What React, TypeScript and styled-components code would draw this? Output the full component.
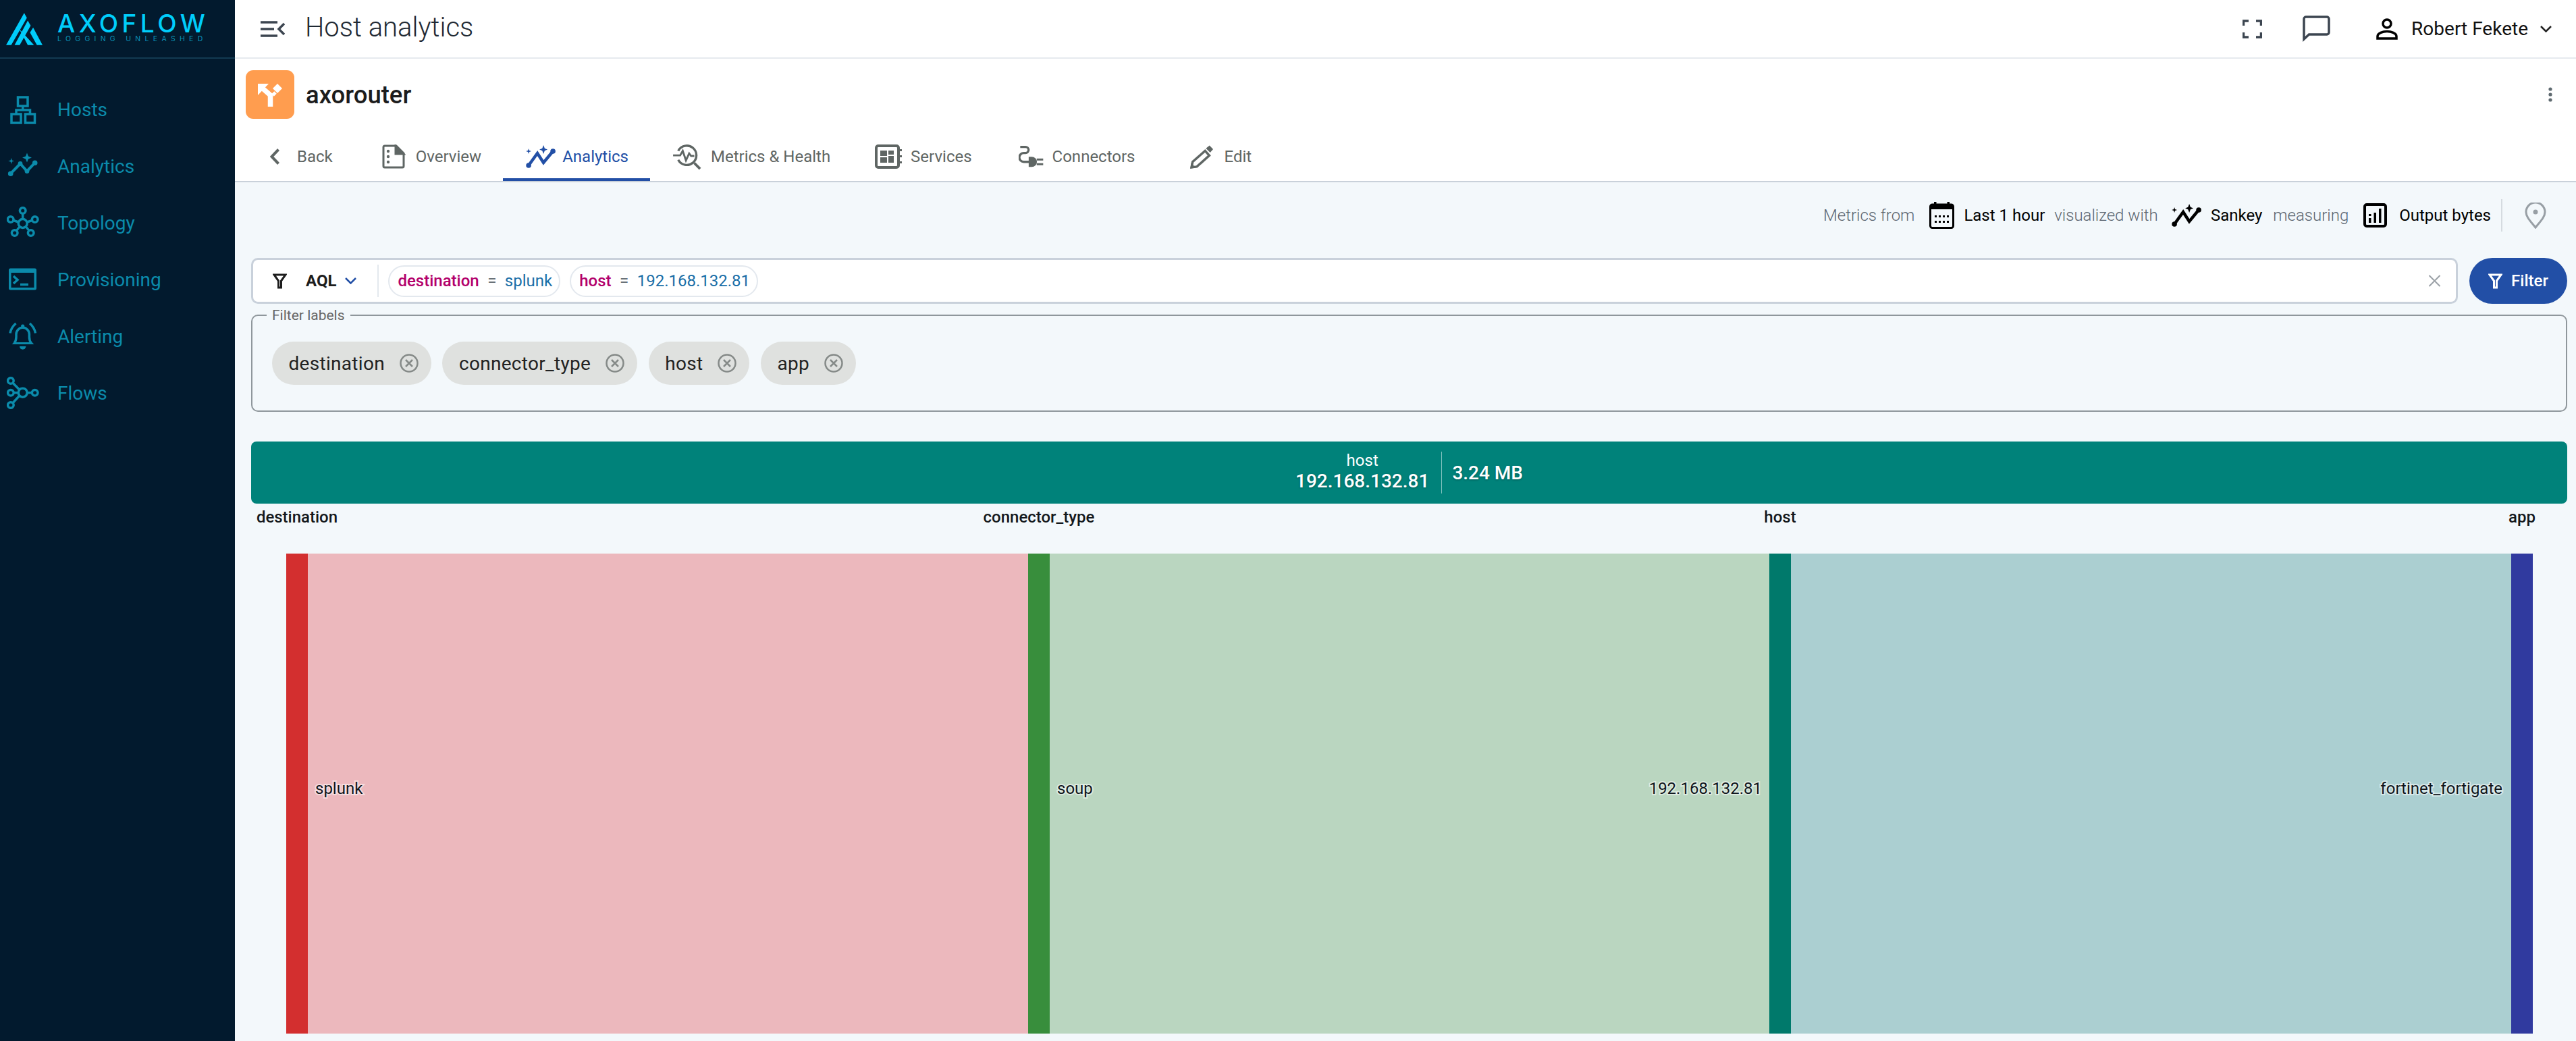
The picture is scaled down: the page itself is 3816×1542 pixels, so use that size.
import styled, { createGlobalStyle } from "styled-components";

// Host analytics page of the Axoflow console

const GlobalStyle = createGlobalStyle`
  html, body {
    margin: 0;
    padding: 0;
    background: #f3f8fb;
    font-family: Roboto, "Liberation Sans", sans-serif;
  }
`;

const teal = "#0b8bab";
const grey = "#5f6664";

const NavIcon = ({ children }: { children: React.ReactNode }) => (
  <svg width={48} height={48} viewBox="0 0 48 48" fill="none" stroke={teal} strokeWidth={3.5}>
    {children}
  </svg>
);

const navItems = [
  {
    label: "Hosts",
    icon: (
      <NavIcon>
        <rect x="16.5" y="6" width="14.5" height="13" />
        <rect x="7" y="31" width="14" height="13" />
        <rect x="27.5" y="31" width="14" height="13" />
        <path d="M23.8 19v6M14 31v-6h20.5v6" />
      </NavIcon>
    ),
  },
  {
    label: "Analytics",
    icon: (
      <NavIcon>
        <path d="M5.7 35.2 20 20.5l10 11 11.7-12.3" strokeWidth={4} />
        <g fill={teal} stroke="none">
          <circle cx="5.7" cy="35.2" r="3.8" />
          <circle cx="20" cy="20.5" r="3.4" />
          <circle cx="30" cy="31.5" r="3.4" />
          <circle cx="41.7" cy="19.2" r="3.8" />
          <path d="M30 4.5 32 9.5 37 11.5 32 13.5 30 18.5 28 13.5 23 11.5 28 9.5Z" />
          <path d="M6.7 12 7.8 15.4 11.2 16.5 7.8 17.6 6.7 21 5.6 17.6 2.2 16.5 5.6 15.4Z" />
        </g>
      </NavIcon>
    ),
  },
  {
    label: "Topology",
    icon: (
      <NavIcon>
        <circle cx="23.7" cy="25" r="6.5" />
        <circle cx="23.7" cy="6" r="4.3" />
        <circle cx="5.7" cy="19" r="4.3" />
        <circle cx="41.7" cy="19" r="4.3" />
        <circle cx="11.7" cy="39" r="4.3" />
        <circle cx="35.7" cy="39" r="4.3" />
        <path d="M23.7 10.5v8M10 20.5l7.5 2.5M37.5 20.5 30 23M14.5 35.5l4.5-5.5M33 35.5 28.5 30" />
      </NavIcon>
    ),
  },
  {
    label: "Provisioning",
    icon: (
      <NavIcon>
        <rect x="3" y="7.5" width="41" height="32" rx="2.5" fill={teal} stroke="none" />
        <rect x="6.5" y="14" width="34" height="22" fill="#021a2e" stroke="none" />
        <path d="M10 19l6 5.5-6 5.5M20 31.5h12" />
      </NavIcon>
    ),
  },
  {
    label: "Alerting",
    icon: (
      <NavIcon>
        <path d="M11 34.5c2-2.5 3-5.5 3-9.5v-4a9.7 9.7 0 0 1 19.4 0v4c0 4 1 7 3 9.5" />
        <path d="M7.7 36h32.6l-2.8-3H10.5Z" fill={teal} stroke="none" />
        <path d="M19 39h9.4a4.7 4.7 0 0 1-9.4 0Z" fill={teal} stroke="none" />
        <circle cx="23.7" cy="9" r="2.6" fill={teal} stroke="none" />
        <path d="M5 19.5Q6.5 11 13.5 5M42.5 19.5Q41 11 34 5" />
      </NavIcon>
    ),
  },
  {
    label: "Flows",
    icon: (
      <NavIcon>
        <circle cx="23.7" cy="23.7" r="6.5" />
        <circle cx="5.9" cy="6" r="4.3" />
        <circle cx="5.9" cy="23.7" r="4.3" />
        <circle cx="5.9" cy="42" r="4.3" />
        <circle cx="41.7" cy="23.7" r="4.3" />
        <path d="M9 9.2 18.5 19M10.2 23.7h7M9 38.8 18.5 28.5M30.2 23.7h7" />
      </NavIcon>
    ),
  },
];

const BrandMark = () => (
  <svg width={54} height={48} viewBox="27 48 163 144" fill="#00cdfb">
    <polygon points="108,48 120,70 50,192 27,192" />
    <polygon points="124,82 137,105 88,192 65,192" />
    <polygon points="84,118 96,138 124,192 152,192" />
    <polygon points="148,113 190,192 165,192 134,136" />
  </svg>
);

const MenuIcon = () => (
  <svg width={36} height={24} viewBox="0 0 36 24" fill="none" stroke="#3c4550" strokeWidth={3.5}>
    <path d="M0 2h25M0 12h20M0 22h25M35 4l-8 8 8 8" />
  </svg>
);

const FullscreenIcon = () => (
  <svg width={29} height={28} viewBox="0 0 29 28" fill="none" stroke="#3c4550" strokeWidth={3.5}>
    <path d="M1.5 9V2H9M20 2h7.5v7M1.5 19v7H9M20 26h7.5v-7" />
  </svg>
);

const ChatIcon = () => (
  <svg width={41} height={39} viewBox="0 0 41 39" fill="none" stroke="#3c4550" strokeWidth={3.5}>
    <path d="M2 35V5a3 3 0 0 1 3-3h31a3 3 0 0 1 3 3v20a3 3 0 0 1-3 3H9.5Z" />
  </svg>
);

const UserIcon = () => (
  <svg width={32} height={32} viewBox="0 0 32 32" fill="none" stroke="#000" strokeWidth={3.5}>
    <circle cx="16" cy="8" r="6" />
    <path d="M2 30v-3c0-5 8-7.5 14-7.5S30 22 30 27v3Z" />
  </svg>
);

const Chevron = ({ color = "#222" }: { color?: string }) => (
  <svg width={17} height={10} viewBox="0 0 17 10" fill="none" stroke={color} strokeWidth={2.5}>
    <path d="M1 1l7.5 7.5L16 1" />
  </svg>
);

const MoreIcon = () => (
  <svg width={6} height={22} viewBox="0 0 6 22" fill="#5f6a70">
    <circle cx="3" cy="3" r="2.6" />
    <circle cx="3" cy="11" r="2.6" />
    <circle cx="3" cy="19" r="2.6" />
  </svg>
);

const RouterGlyph = () => (
  <svg width={72} height={72} viewBox="0 0 72 72" fill="#fff">
    <path d="M36.5 54V37L24 26" fill="none" stroke="#fff" strokeWidth={7.5} />
    <polygon points="18,20 34,20 18,37" />
    <polygon points="47,20 54,27 47,34 40,27" />
    <path d="M40 37l4-4" stroke="#fff" strokeWidth={5} />
  </svg>
);

const BackIcon = () => (
  <svg width={14} height={24} viewBox="0 0 14 24" fill="none" stroke={grey} strokeWidth={4}>
    <path d="M12.5 1.5 2.5 12l10 10.5" />
  </svg>
);

const OverviewIcon = () => (
  <svg width={36} height={36} viewBox="0 0 36 36" fill="none" stroke={grey} strokeWidth={3}>
    <path d="M3 4a2 2 0 0 1 2-2h17l11 11v19a2 2 0 0 1-2 2H5a2 2 0 0 1-2-2Z" />
    <path d="M21 2v12h12Z" fill={grey} />
    <g fill={grey} stroke="none">
      <circle cx="10" cy="10" r="2.2" />
      <circle cx="10" cy="18" r="2.2" />
      <circle cx="10" cy="26" r="2.2" />
    </g>
  </svg>
);

const SparkLine = ({ color, size }: { color: string; size: number }) => (
  <svg width={size * 1.3} height={size} viewBox="0 0 44 34" fill={color}>
    <path d="M4 30 17 12l9 14 14-17" fill="none" stroke={color} strokeWidth={4.5} />
    <circle cx="4" cy="30" r="3.8" />
    <circle cx="40" cy="9" r="3.8" />
    <path d="M26 0 27.8 4.7 32 6.5 27.8 8.3 26 13 24.2 8.3 20 6.5 24.2 4.7Z" />
    <path d="M4 5 5 8 8 9 5 10 4 13 3 10 0 9 3 8Z" />
  </svg>
);

const MetricsIcon = () => (
  <svg width={44} height={40} viewBox="0 0 46 42" fill="none" stroke={grey} strokeWidth={3.5}>
    <path d="M8 12A15 15 0 1 1 8 26" />
    <path d="M33 31l9 9" strokeWidth={4} />
    <path d="M0 19h11l4-7 5 15 5-11 3 4h5" strokeWidth={3} />
  </svg>
);

const ServicesIcon = () => (
  <svg width={40} height={36} viewBox="0 0 40 36" fill={grey}>
    <rect x="2" y="2" width="33" height="32" rx="3" fill="none" stroke={grey} strokeWidth={4} />
    <rect x="8" y="9" width="10" height="8" />
    <rect x="20" y="9" width="8" height="6" />
    <rect x="8" y="19" width="10" height="8" />
    <rect x="20" y="17" width="8" height="10" />
    <rect x="37" y="7" width="3" height="3" />
    <rect x="37" y="16" width="3" height="3" />
    <rect x="37" y="25" width="3" height="3" />
  </svg>
);

const ConnectorsIcon = () => (
  <svg width={38} height={33} viewBox="55 40 115 100" fill={grey}>
    <path d="M62 48h24a13.5 13.5 0 0 1 0 27H78a20 20 0 0 0 0 40h24" fill="none" stroke={grey} strokeWidth={10} />
    <path d="M100 92h14a23 23 0 0 1 0 46h-14Z" />
    <rect x="136" y="100" width="29" height="9" />
    <rect x="136" y="121" width="29" height="9" />
  </svg>
);

const EditIcon = () => (
  <svg width={36} height={36} viewBox="810 30 115 115" fill={grey}>
    <path d="M820 138l5-26 59-52 20 22-59 53Z" fill="none" stroke={grey} strokeWidth={11} />
    <polygon points="888,48 905,35 922,52 908,68" />
    <polygon points="814,144 818,118 840,140" />
  </svg>
);

const CalendarIcon = () => (
  <svg width={37} height={40} viewBox="0 0 37 40" fill="#000">
    <rect x="1.5" y="4" width="34" height="34.5" rx="3" fill="none" stroke="#000" strokeWidth={3} />
    <rect x="2" y="4" width="33" height="7" />
    <rect x="7" y="0" width="3.5" height="5" />
    <rect x="26.5" y="0" width="3.5" height="5" />
    {[8, 14, 20, 26].map((x) => (
      <g key={x}>
        <rect x={x} y="20" width="3" height="3" />
        <rect x={x} y="28" width="3" height="3" />
      </g>
    ))}
  </svg>
);

const BarsIcon = () => (
  <svg width={35} height={36} viewBox="0 0 35 36" fill="#000">
    <rect x="2" y="2" width="31" height="32" rx="3" fill="none" stroke="#000" strokeWidth={4} />
    <rect x="8" y="22" width="3.5" height="7" />
    <rect x="8" y="16" width="3.5" height="3" />
    <rect x="15.5" y="14" width="3.5" height="15" />
    <rect x="23" y="8" width="3.5" height="21" />
  </svg>
);

const PinIcon = () => (
  <svg width={32} height={39} viewBox="0 0 32 39" fill="none" stroke="#989fa5" strokeWidth={3}>
    <path d="M16 37C8 27 2 21 2 14a14 14 0 0 1 28 0c0 7-6 13-14 23Z" />
    <circle cx="16" cy="14" r="3.5" fill="#989fa5" stroke="none" />
  </svg>
);

const FunnelIcon = ({ color }: { color: string }) => (
  <svg width={21} height={23} viewBox="0 0 21 23" fill="none" stroke={color} strokeWidth={3}>
    <path d="M2 2h17l-6.5 9v10h-4V11Z" />
  </svg>
);

const ClearIcon = () => (
  <svg width={19} height={18} viewBox="0 0 19 18" fill="none" stroke="#9aa0a6" strokeWidth={2}>
    <path d="M1.5 1 17.5 17M17.5 1 1.5 17" />
  </svg>
);

const RemoveIcon = () => (
  <svg width={28} height={28} viewBox="0 0 28 28" fill="none" stroke="#858a88" strokeWidth={2.5}>
    <circle cx="14" cy="14" r="12.5" />
    <path d="M9 9l10 10M19 9 9 19" />
  </svg>
);

const tabs = [
  { label: "Overview", icon: <OverviewIcon />, gap: 15 },
  { label: "Analytics", icon: <SparkLine color="#224fa6" size={34} />, gap: 10, active: true },
  { label: "Metrics & Health", icon: <MetricsIcon />, gap: 12 },
  { label: "Services", icon: <ServicesIcon />, gap: 13 },
  { label: "Connectors", icon: <ConnectorsIcon />, gap: 12, lead: 37 },
];

const labels = ["destination", "connector_type", "host", "app"];

// sankey geometry, page coordinates
const top = 820;
const bottom = 1531;
const links = [
  { x1: 456, x2: 1523, fill: "#ecb8bd" },
  { x1: 1555, x2: 2621, fill: "#bad6c0" },
  { x1: 2653, x2: 3720, fill: "#abcfd1" },
];
const nodes = [
  { x: 424, fill: "#d32f2f", axis: "destination" },
  { x: 1523, fill: "#388e3c", axis: "connector_type" },
  { x: 2621, fill: "#00796b", axis: "host" },
  { x: 3720, fill: "#303a9f", axis: "app" },
];

const App = () => {
  return (
    <Shell>
      <GlobalStyle />
      <Sidebar>
        <Brand>
          <BrandMark />
          <BrandText>
            <BrandName>AXOFLOW</BrandName>
            <BrandTag>LOGGING UNLEASHED</BrandTag>
          </BrandText>
        </Brand>
        <Nav>
          {navItems.map((item) => (
            <NavRow key={item.label}>
              {item.icon}
              <span>{item.label}</span>
            </NavRow>
          ))}
        </Nav>
      </Sidebar>
      <Main>
        <Header>
          <MenuIcon />
          <Title>Host analytics</Title>
          <HeaderActions>
            <FullscreenIcon />
            <ChatIcon />
            <UserBox>
              <UserIcon />
              <UserName>Robert Fekete</UserName>
              <Chevron />
            </UserBox>
          </HeaderActions>
        </Header>
        <HostCard>
          <HostRow>
            <HostBadge>
              <RouterGlyph />
            </HostBadge>
            <HostName>axorouter</HostName>
            <MoreIcon />
          </HostRow>
          <Tabs>
            <BackTab>
              <BackIcon />
              Back
            </BackTab>
            {tabs.map((tab) => (
              <Tab key={tab.label} $active={tab.active} $gap={tab.gap} $lead={tab.lead}>
                {tab.icon}
                {tab.label}
              </Tab>
            ))}
            <EditTab $gap={16}>
              <EditIcon />
              Edit
            </EditTab>
          </Tabs>
        </HostCard>
        <Content>
          <MetricsRow>
            <Muted>Metrics from</Muted>
            <Setting>
              <CalendarIcon />
              Last 1 hour
            </Setting>
            <Muted $left={14}>visualized with</Muted>
            <Setting $left={20}>
              <SparkLine color="#000" size={34} />
              Sankey
            </Setting>
            <Muted>measuring</Muted>
            <Setting $gap={18}>
              <BarsIcon />
              Output bytes
            </Setting>
            <MetricsDivider />
            <PinIcon />
          </MetricsRow>
          <FilterRow>
            <SearchBox>
              <FunnelIcon color="#1d1d1d" />
              <QueryMode>
                AQL
                <Chevron color="#224fa6" />
              </QueryMode>
              <SearchDivider />
              <QueryChip>
                <QueryKey>destination</QueryKey>
                <QueryOp>=</QueryOp>
                <QueryValue>splunk</QueryValue>
              </QueryChip>
              <QueryChip>
                <QueryKey>host</QueryKey>
                <QueryOp>=</QueryOp>
                <QueryValue>192.168.132.81</QueryValue>
              </QueryChip>
              <ClearSlot>
                <ClearIcon />
              </ClearSlot>
            </SearchBox>
            <FilterButton>
              <FunnelIcon color="#fff" />
              Filter
            </FilterButton>
          </FilterRow>
          <LabelsBox>
            <LabelsLegend>Filter labels</LabelsLegend>
            <LabelChips>
              {labels.map((label) => (
                <LabelChip key={label}>
                  {label}
                  <RemoveIcon />
                </LabelChip>
              ))}
            </LabelChips>
          </LabelsBox>
          <SummaryBar>
            <SummaryName>
              <SummaryKey>host</SummaryKey>
              <SummaryValue>192.168.132.81</SummaryValue>
            </SummaryName>
            <SummaryTotal>3.24 MB</SummaryTotal>
          </SummaryBar>
          <Chart viewBox="372 746 3431 796" width={3431} height={796}>
            {links.map((link) => (
              <rect key={link.x1} x={link.x1} y={top} width={link.x2 - link.x1} height={bottom - top} fill={link.fill} />
            ))}
            {nodes.map((node) => (
              <g key={node.x}>
                <rect x={node.x} y={top} width={32} height={bottom - top} fill={node.fill} />
                <AxisText x={node.x + 16} y={774} textAnchor="middle">
                  {node.axis}
                </AxisText>
              </g>
            ))}
            <NodeText x={467} y={1176}>splunk</NodeText>
            <NodeText x={1566} y={1176}>soup</NodeText>
            <NodeText x={2610} y={1176} textAnchor="end">192.168.132.81</NodeText>
            <NodeText x={3707} y={1176} textAnchor="end">fortinet_fortigate</NodeText>
          </Chart>
        </Content>
      </Main>
    </Shell>
  );
};

export default App;

const Shell = styled.div`
  display: flex;
  width: 3816px;
  height: 1542px;
  overflow: hidden;
  background: #f3f8fb;
`;

const Sidebar = styled.aside`
  flex: 0 0 348px;
  background: #021a2e;
`;

const Brand = styled.div`
  display: flex;
  align-items: center;
  gap: 22px;
  height: 87px;
  padding-left: 9px;
  box-sizing: border-box;
  border-bottom: 2px solid #123a52;
`;

const BrandText = styled.div`
  display: flex;
  flex-direction: column;
  margin-top: -2px;
`;

const BrandName = styled.div`
  font-family: Inter, sans-serif;
  font-size: 37px;
  font-weight: 500;
  line-height: 30px;
  letter-spacing: 5.5px;
  color: #00cdfb;
`;

const BrandTag = styled.div`
  margin-top: 2px;
  font-family: Inter, sans-serif;
  font-size: 10.5px;
  line-height: 12px;
  letter-spacing: 6.3px;
  white-space: nowrap;
  color: #0b93b8;
`;

const Nav = styled.nav`
  display: flex;
  flex-direction: column;
  padding-top: 33px;
`;

const NavRow = styled.div`
  display: flex;
  align-items: center;
  gap: 27px;
  height: 84px;
  padding-left: 10px;
  font-size: 28px;
  color: ${teal};
`;

const Main = styled.main`
  flex: 1;
  min-width: 0;
  display: flex;
  flex-direction: column;
`;

const Header = styled.header`
  display: flex;
  align-items: center;
  height: 87px;
  padding: 0 36px 0 38px;
  box-sizing: border-box;
  background: #fff;
  border-bottom: 2px solid #e6eaee;
`;

const Title = styled.h1`
  margin: 0 0 4px 30px;
  font-size: 40px;
  font-weight: 300;
  color: #1f2933;
`;

const HeaderActions = styled.div`
  margin-left: auto;
  display: flex;
  align-items: center;
  gap: 60px;
`;

const UserBox = styled.div`
  display: flex;
  align-items: center;
  margin-left: 8px;
  gap: 18px;
`;

const UserName = styled.span`
  margin-left: 2px;
  font-size: 28px;
  color: #111;
`;

const HostCard = styled.section`
  display: flex;
  flex-direction: column;
  justify-content: space-between;
  height: 183px;
  box-sizing: border-box;
  background: #fff;
  border-bottom: 2px solid #c9d1da;
`;

const HostRow = styled.div`
  display: flex;
  align-items: center;
  padding: 17px 35px 0 16px;
`;

const HostBadge = styled.div`
  width: 72px;
  height: 72px;
  border-radius: 11px;
  background: #ff9d4f;
`;

const HostName = styled.div`
  flex: 1;
  margin-left: 17px;
  font-size: 36.5px;
  font-weight: 500;
  color: #1c1c1c;
`;

const Tabs = styled.nav`
  display: flex;
  height: 72px;
  padding-left: 18px;
`;

const Tab = styled.div<{ $active?: boolean; $gap: number; $lead?: number }>`
  display: flex;
  align-items: center;
  gap: ${(props) => props.$gap}px;
  padding: 3px 32px 0 ${(props) => props.$lead ?? 34}px;
  font-size: 24px;
  color: ${(props) => (props.$active ? "#224fa6" : grey)};
  border-bottom: 4px solid ${(props) => (props.$active ? "#224fa6" : "transparent")};
`;

const BackTab = styled(Tab).attrs({ $gap: 26 })`
  margin-right: 6px;
`;

const EditTab = styled(Tab)`
  margin-left: 14px;
`;

const Content = styled.div`
  display: flex;
  flex-direction: column;
  padding: 0 13px 0 24px;
`;

const MetricsRow = styled.div`
  display: flex;
  align-items: center;
  justify-content: flex-end;
  height: 98px;
  margin-bottom: 14px;
  padding-right: 31px;
  font-size: 24px;
`;

const Muted = styled.span<{ $left?: number }>`
  margin-left: ${(props) => props.$left ?? 16}px;
  color: #5c6670;
  font-weight: 300;
`;

const Setting = styled.span<{ $left?: number; $gap?: number }>`
  display: flex;
  align-items: center;
  gap: ${(props) => props.$gap ?? 14}px;
  margin-left: ${(props) => props.$left ?? 22}px;
  color: #000;
`;

const MetricsDivider = styled.div`
  width: 2px;
  height: 48px;
  margin: 0 33px 0 15px;
  background: #d5dbe0;
`;

const FilterRow = styled.div`
  display: flex;
  gap: 17px;
  height: 68px;
`;

const SearchBox = styled.div`
  flex: 1;
  display: flex;
  align-items: center;
  padding-left: 29px;
  box-sizing: border-box;
  background: #fff;
  border: 3px solid #c9d1db;
  border-radius: 10px;
  font-size: 24px;
`;

const QueryMode = styled.div`
  display: flex;
  align-items: center;
  gap: 13px;
  margin-left: 28px;
  font-weight: 700;
  color: #1d1d1d;
`;

const SearchDivider = styled.div`
  width: 2px;
  height: 48px;
  margin: 0 14px 0 31px;
  background: #e3e8ee;
`;

const QueryChip = styled.div`
  display: flex;
  align-items: center;
  gap: 12.5px;
  height: 47px;
  margin-right: 14px;
  padding: 0 10px 0 12px;
  box-sizing: border-box;
  border: 2px solid #e3e8ee;
  border-radius: 24px;
`;

const QueryKey = styled.span`
  font-weight: 500;
  color: #b3006b;
`;

const QueryOp = styled.span`
  color: #6a7278;
`;

const QueryValue = styled.span`
  color: #1a6fa8;
`;

const ClearSlot = styled.div`
  margin-left: auto;
  margin-right: 22px;
  display: flex;
`;

const FilterButton = styled.button`
  flex: 0 0 145px;
  display: flex;
  align-items: center;
  justify-content: center;
  gap: 13px;
  border: 0;
  border-radius: 34px;
  background: #224fa6;
  color: #fff;
  font-family: Roboto, sans-serif;
  font-size: 24px;
  font-weight: 500;
`;

const LabelsBox = styled.fieldset`
  height: 155px;
  margin: 5px 0 0;
  padding: 0 0 0 21px;
  box-sizing: border-box;
  border: 2px solid #8f979c;
  border-radius: 10px;
`;

const LabelsLegend = styled.legend`
  padding: 0 8px;
  font-size: 21px;
  line-height: 24px;
  color: #666;
`;

const LabelChips = styled.div`
  display: flex;
  gap: 16.5px;
  margin: 27px 0 0 8px;
`;

const LabelChip = styled.div`
  display: flex;
  align-items: center;
  gap: 22px;
  height: 64px;
  padding: 0 19px 0 24.5px;
  border-radius: 32px;
  background: #dfe1df;
  font-size: 28px;
  letter-spacing: 0.3px;
  color: #222;
`;

const SummaryBar = styled.div`
  display: flex;
  align-items: center;
  justify-content: center;
  height: 92px;
  margin-top: 44px;
  border-radius: 8px;
  background: #00827a;
  color: #fff;
`;

const SummaryName = styled.div`
  display: flex;
  flex-direction: column;
  align-items: center;
  padding-right: 18px;
  border-right: 1px solid rgba(255, 255, 255, 0.5);
`;

const SummaryKey = styled.span`
  font-size: 24px;
  line-height: 26px;
`;

const SummaryValue = styled.span`
  font-size: 28px;
  line-height: 36px;
  font-weight: 500;
  text-shadow: 0 1px 3px rgba(0, 0, 0, 0.3);
`;

const SummaryTotal = styled.span`
  padding-left: 15px;
  font-size: 28px;
  font-weight: 500;
  text-shadow: 0 1px 3px rgba(0, 0, 0, 0.3);
`;

const Chart = styled.svg`
  display: block;
  flex: none;
`;

const AxisText = styled.text`
  font-family: Roboto, sans-serif;
  font-size: 24px;
  font-weight: 500;
  fill: #14181c;
`;

const NodeText = styled.text`
  font-family: Roboto, sans-serif;
  font-size: 24px;
  fill: #10161c;
  stroke: rgba(255, 255, 255, 0.5);
  stroke-width: 4px;
  paint-order: stroke;
`;
